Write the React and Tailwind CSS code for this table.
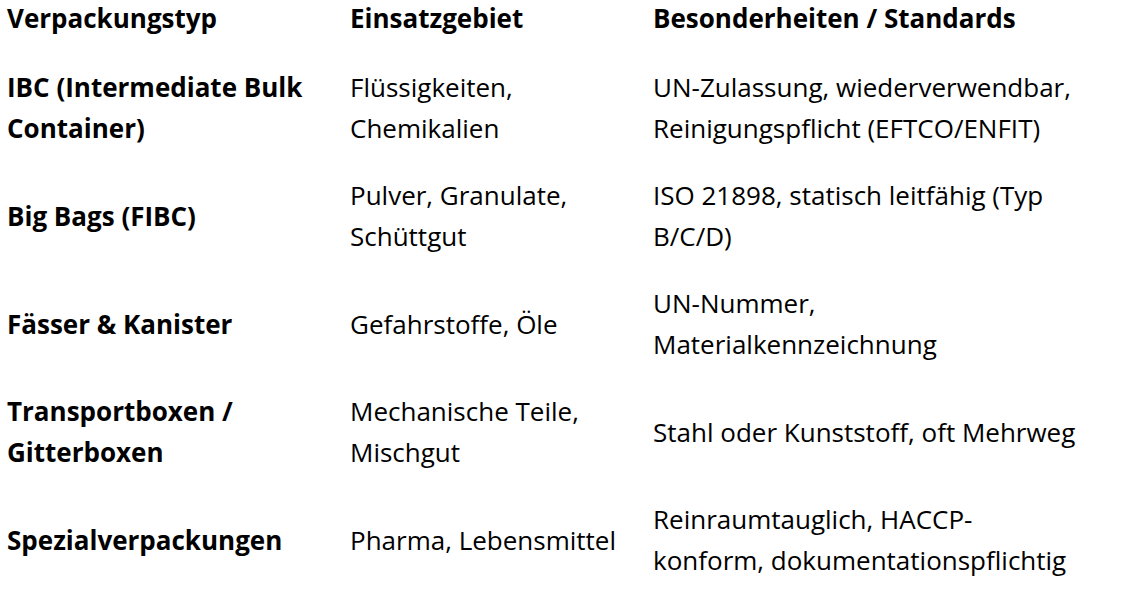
export default function App() {
  const rows = [
    [["IBC (Intermediate Bulk", "Container)"], ["Flüssigkeiten,", "Chemikalien"], ["UN-Zulassung, wiederverwendbar,", "Reinigungspflicht (EFTCO/ENFIT)"]],
    [["Big Bags (FIBC)"], ["Pulver, Granulate,", "Schüttgut"], ["ISO 21898, statisch leitfähig (Typ", "B/C/D)"]],
    [["Fässer & Kanister"], ["Gefahrstoffe, Öle"], ["UN-Nummer,", "Materialkennzeichnung"]],
    [["Transportboxen /", "Gitterboxen"], ["Mechanische Teile,", "Mischgut"], ["Stahl oder Kunststoff, oft Mehrweg"]],
    [["Spezialverpackungen"], ["Pharma, Lebensmittel"], ["Reinraumtauglich, HACCP-", "konform, dokumentationspflichtig"]],
  ];
  const lines = (arr) => arr.map((l, j) => <div key={j} className="whitespace-nowrap">{l}</div>);
  return (
    <div className="w-[1123px] h-[591px] overflow-hidden bg-white text-black text-[26px] leading-[41px]" style={{ fontFamily: '"Open Sans", sans-serif' }}>
      <div className="grid grid-cols-[343px_303px_1fr] items-center -mt-[2px]">
        <div className="px-[7px] pb-[15px] font-bold">Verpackungstyp</div>
        <div className="px-[7px] pb-[15px] font-bold">Einsatzgebiet</div>
        <div className="px-[7px] pb-[15px] font-bold">Besonderheiten / Standards</div>
        {rows.map((r, i) => [
          <div key={i + "a"} className="px-[7px] py-[13px] font-bold">{lines(r[0])}</div>,
          <div key={i + "b"} className="px-[7px] py-[13px]">{lines(r[1])}</div>,
          <div key={i + "c"} className="px-[7px] py-[13px]">{lines(r[2])}</div>,
        ])}
      </div>
    </div>
  );
}
